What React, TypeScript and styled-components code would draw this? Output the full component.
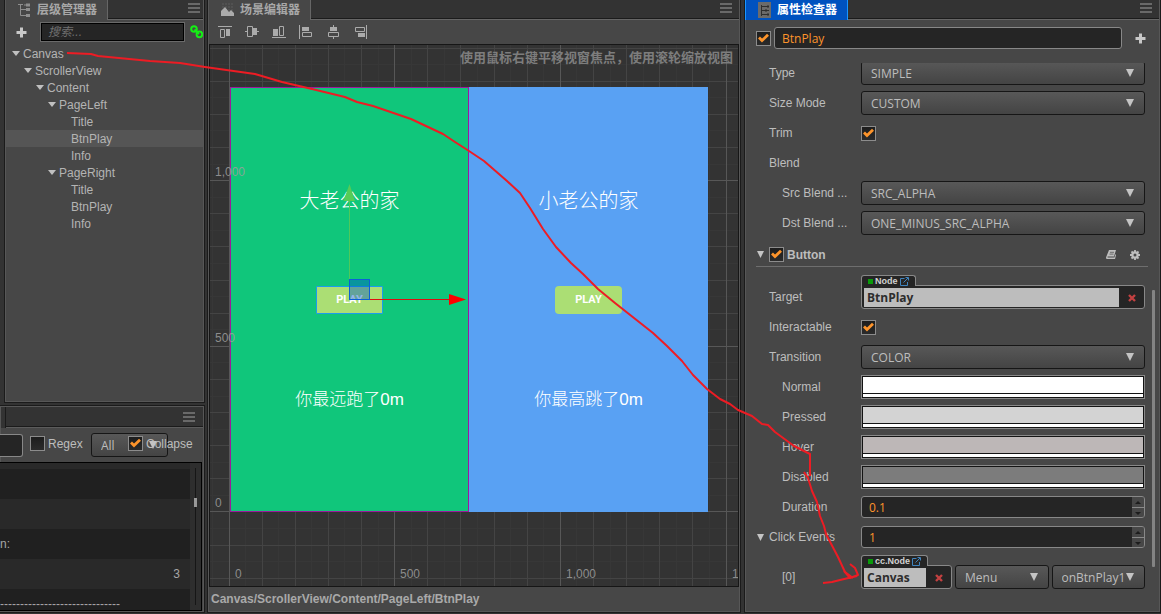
import React, { useId } from "react";
import styled, { createGlobalStyle, css } from "styled-components";

const UI = `"Liberation Sans", "Noto Sans CJK SC", sans-serif`;
const FIELD = `"Open Sans", "Noto Sans CJK SC", sans-serif`;
const C = {
  gap: "#333333",
  panel: "#474747",
  line: "#1b1b1b",
  light: "#666666",
  text: "#bdbdbd",
  orange: "#fd942b",
  field: "#252525",
  rim: "#888888",
};

const Global = createGlobalStyle`
  * { box-sizing: border-box; }
  body { margin: 0; background: ${C.gap}; color: ${C.text}; font: 12px/16px ${UI}; }
  input, select, button { font: inherit; color: inherit; margin: 0; padding: 0; }
  button { background: none; border: 0; display: grid; place-items: center; }
  svg { display: block; }
`;

const Shell = styled.div`
  position: relative;
  display: grid;
  grid-template-columns: 204px minmax(0, 1fr) 416px;
  grid-template-rows: minmax(0, 1fr);
  gap: 4px;
  height: 100vh;
  padding: 0 1px 2px 0;
  overflow: hidden;
`;

const LeftColumn = styled.div`
  display: grid;
  grid-template-rows: 402px minmax(0, 1fr);
  gap: 4px;
  min-width: 0;
`;

const Panel = styled.section<{ $inset?: number; $top?: boolean }>`
  display: flex;
  flex-direction: column;
  min-width: 0;
  min-height: 0;
  background: ${C.panel};
  border: 1px solid #575757;
  border-top-width: ${(p) => (p.$top ? 1 : 0)}px;
  box-shadow: 0 0 0 1px ${C.line};
  margin-left: ${(p) => p.$inset ?? 0}px;
`;

const TabBar = styled.header<{ $end?: number }>`
  display: flex;
  justify-content: space-between;
  align-items: flex-start;
  height: 20px;
  padding-right: ${(p) => p.$end ?? 7}px;
  background: linear-gradient(${C.gap} 18px, ${C.line} 18px, ${C.line} 19px, ${C.light} 19px);
`;

const Tab = styled.h2<{ $active?: boolean }>`
  display: flex;
  align-items: center;
  gap: 6px;
  margin: 0;
  height: 20px;
  padding: 0 10px 1px 12px;
  font: bold 12px/18px ${UI};
  color: ${(p) => (p.$active ? "#ffffff" : "#a8a8a8")};
  background: ${(p) => (p.$active ? "#0052bf" : C.panel)};
  border-right: 1px solid ${(p) => (p.$active ? "#1a96ff" : C.light)};
  margin-left: ${(p) => (p.$active ? -1 : 0)}px;
  border-left: ${(p) => (p.$active ? "1px solid #1a96ff" : "0")};
`;

const MenuButton = styled.button`
  width: 12px;
  height: 16px;
  color: #7c7c7c;
`;

/* ---------- shared controls ---------- */

const TickBox = styled.span`
  display: inline-grid;
  flex: none;
  width: 15px;
  height: 15px;
  > * { grid-area: 1 / 1; }
  input {
    appearance: none;
    width: 15px;
    height: 15px;
    border: 1px solid #8c8c8c;
    background: linear-gradient(#1d1d1d, #2b2b2b);
  }
  svg { pointer-events: none; }
`;

function Check({ id, label, checked }: { id?: string; label?: string; checked?: boolean }) {
  return (
    <TickBox>
      <input type="checkbox" id={id} aria-label={label} defaultChecked={checked} />
      {checked && (
        <svg width="15" height="15" viewBox="0 0 15 15" aria-hidden="true">
          <path d="M3 6.6 L6 9.6 L12 3.8" fill="none" stroke={C.orange} strokeWidth="2.8" />
        </svg>
      )}
    </TickBox>
  );
}

const SelectBox = styled.span<{ $pad?: number }>`
  position: relative;
  display: flex;
  flex: 1 1 0;
  min-width: 0;
  select {
    appearance: none;
    width: 100%;
    height: 24px;
    padding: 2px 16px 0 ${(p) => p.$pad ?? 9}px;
    border: 1px solid #161616;
    border-radius: 3px;
    background: linear-gradient(#585858, #444444);
    font: 12px/20px ${FIELD};
    color: ${C.text};
  }
  svg {
    position: absolute;
    right: 11px;
    top: 8px;
    pointer-events: none;
  }
`;

function Select({ id, label, value, pad }: { id?: string; label?: string; value: string; pad?: number }) {
  return (
    <SelectBox $pad={pad}>
      <select id={id} aria-label={label} defaultValue={value}>
        <option>{value}</option>
      </select>
      <svg width="8" height="8" viewBox="0 0 8 8" aria-hidden="true">
        <path d="M0 0H8L4 8Z" fill="#c4c4c4" />
      </svg>
    </SelectBox>
  );
}

const TextField = styled.input`
  flex: 1 1 0;
  min-width: 0;
  height: 22px;
  padding: 0 7px;
  border: 1px solid ${C.rim};
  border-radius: 3px;
  background: ${C.field};
  font: 12px/20px ${FIELD};
  color: ${C.orange};
`;

const ColorBox = styled.span`
  flex: 1 1 0;
  display: grid;
  grid-template-rows: 16px 3px;
  gap: 1px;
  padding: 1px;
  border: 1px solid ${C.rim};
  background: #141414;
  input {
    appearance: none;
    display: block;
    width: 100%;
    height: 100%;
    border: 0;
    background: none;
  }
  input::-webkit-color-swatch-wrapper { padding: 0; }
  input::-webkit-color-swatch { border: 0; border-radius: 0; }
`;

const AlphaBar = styled.span`
  background: #ffffff;
`;

const NumberBox = styled.span`
  flex: 1 1 0;
  display: grid;
  grid-template-columns: minmax(0, 1fr) 12px;
  height: 22px;
  border: 1px solid ${C.rim};
  border-radius: 3px;
  background: ${C.field};
  overflow: hidden;
  input {
    min-width: 0;
    border: 0;
    padding: 1px 7px 0;
    background: none;
    font: 12px/20px ${FIELD};
    color: ${C.orange};
  }
`;

const Stepper = styled.span`
  display: grid;
  grid-template-rows: 1fr 1fr;
  gap: 1px;
  background: ${C.rim};
  button { background: #474747; color: #1c1c1c; }
`;

function NumberField({ id, value }: { id: string; value: string }) {
  return (
    <NumberBox>
      <input id={id} defaultValue={value} inputMode="decimal" />
      <Stepper>
        <button aria-label="Increase"><svg width="6" height="3" viewBox="0 0 6 3"><path d="M0 3H6L3 0Z" fill="currentColor" /></svg></button>
        <button aria-label="Decrease"><svg width="6" height="3" viewBox="0 0 6 3"><path d="M0 0H6L3 3Z" fill="currentColor" /></svg></button>
      </Stepper>
    </NumberBox>
  );
}

const NodeBox = styled.span`
  position: relative;
  flex: 1 1 0;
  min-width: 0;
  display: grid;
  grid-template-columns: minmax(0, 1fr) 25px;
  height: 24px;
  padding: 2px 0 2px 2px;
  border: 1px solid ${C.rim};
  border-radius: 0 3px 3px 3px;
  background: ${C.field};
  input {
    min-width: 0;
    border: 0;
    padding: 1px 3px 0;
    background: #bdbdbd;
    font: bold 12px/18px ${FIELD};
    color: #2d2d2d;
  }
`;

const NodeTag = styled.span`
  position: absolute;
  left: -1px;
  top: -11px;
  display: flex;
  align-items: center;
  gap: 2px;
  height: 11px;
  padding: 0 6px;
  border: 1px solid ${C.rim};
  border-bottom: 0;
  border-radius: 3px 3px 0 0;
  background: ${C.field};
  font: bold 9px/10px ${UI};
  color: #d2d2d2;
`;

const TypeDot = styled.i`
  width: 5px;
  height: 5px;
  background: #0a9b0a;
`;

function NodeField({ id, label, type, value }: { id?: string; label?: string; type: string; value: string }) {
  return (
    <NodeBox>
      <NodeTag>
        <TypeDot />
        {type}
        <svg width="9" height="9" viewBox="0 0 9 9" fill="none" stroke="#3f83bd" aria-hidden="true">
          <path d="M4.5 1.5H.5V8.5H7.5V5M3.5 5.5L8 1M5.5 .5H8.5V3.5" />
        </svg>
      </NodeTag>
      <input id={id} aria-label={label} defaultValue={value} readOnly />
      <button aria-label="Clear">
        <svg width="8" height="8" viewBox="0 0 8 8"><path d="M1 1L7 7M7 1L1 7" stroke="#c24141" strokeWidth="2.4" /></svg>
      </button>
    </NodeBox>
  );
}

const Plus = () => (
  <svg width="11" height="11" viewBox="0 0 11 11" aria-hidden="true">
    <path d="M4 0.5H7V4H10.5V7H7V10.5H4V7H0.5V4H4Z" fill="#c8c8c8" />
  </svg>
);

const Menu = ({ label }: { label: string }) => (
  <MenuButton aria-label={label}>
    <svg width="12" height="10" viewBox="0 0 12 10"><path d="M0 1H12M0 5H12M0 9H12" stroke="currentColor" strokeWidth="1.6" /></svg>
  </MenuButton>
);

/* ---------- hierarchy ---------- */

const SearchRow = styled.div`
  display: flex;
  align-items: center;
  height: 23px;
  padding: 1px 0 0 10px;
  margin-bottom: 2px;
  overflow: hidden;
  button { flex: none; }
  input {
    flex: 1 1 0;
    min-width: 0;
    height: 20px;
    margin: 0 5px 0 13px;
    padding: 0 7px;
    border: 1px solid #6a6a6a;
    outline: 1px solid #000;
    outline-offset: -2px;
    background: ${C.field};
    font-style: italic;
  }
  input::placeholder { color: #6f6f6f; }
`;

const Tree = styled.ul`
  margin: 0;
  padding: 0;
  list-style: none;
`;

const TreeRow = styled.li<{ $depth: number; $selected?: boolean }>`
  display: flex;
  align-items: center;
  gap: 3px;
  height: 17px;
  padding-left: ${(p) => 6 + p.$depth * 12}px;
  color: #b4b4b4;
  background: ${(p) => (p.$selected ? "#555555" : "transparent")};
`;

const Twisty = styled.span`
  width: 8px;
  color: #c0c0c0;
`;

const nodes = [
  { name: "Canvas", depth: 0, open: true },
  { name: "ScrollerView", depth: 1, open: true },
  { name: "Content", depth: 2, open: true },
  { name: "PageLeft", depth: 3, open: true },
  { name: "Title", depth: 4 },
  { name: "BtnPlay", depth: 4, selected: true },
  { name: "Info", depth: 4 },
  { name: "PageRight", depth: 3, open: true },
  { name: "Title", depth: 4 },
  { name: "BtnPlay", depth: 4 },
  { name: "Info", depth: 4 },
];

function Hierarchy() {
  return (
    <Panel $inset={5}>
      <TabBar $end={3}>
        <Tab>
          <svg width="13" height="14" viewBox="0 0 13 14" fill="none" stroke="#8e8e8e" aria-hidden="true">
            <path d="M0 1.5H5M2.5 2V12.5H8M2.5 6.5H8" />
            <path d="M8 2H12M8 6.5H12M8 12.5H12" strokeWidth="3" />
            <path d="M6 2H8" />
          </svg>
          层级管理器
        </Tab>
        <Menu label="层级管理器" />
      </TabBar>
      <SearchRow>
        <button aria-label="Add node"><Plus /></button>
        <input type="search" placeholder="搜索..." aria-label="搜索" />
        <button aria-label="Link">
          <svg width="13" height="14" viewBox="0 0 13 14" fill="none" stroke="#15ee15" strokeWidth="2" aria-hidden="true">
            <circle cx="4" cy="4" r="2.8" />
            <circle cx="9.4" cy="9.4" r="2.8" />
            <path d="M4.5 4.5L9 9" />
          </svg>
        </button>
      </SearchRow>
      <Tree>
        {nodes.map((n, i) => (
          <TreeRow key={i} $depth={n.depth} $selected={n.selected}>
            <Twisty>
              {n.open && <svg width="8" height="5" viewBox="0 0 8 5"><path d="M0 0H8L4 5Z" fill="currentColor" /></svg>}
            </Twisty>
            {n.name}
          </TreeRow>
        ))}
      </Tree>
    </Panel>
  );
}

/* ---------- console ---------- */

const ConsoleTabs = styled(TabBar)`
  height: 21px;
  padding-top: 2px;
  background: linear-gradient(${C.gap} 19px, ${C.line} 19px, ${C.line} 20px, #5c5c5c 20px);
  border-left: 4px solid ${C.gap};
  box-shadow: inset 1px 0 ${C.line};
`;

const ConsoleTools = styled.div`
  display: grid;
  grid-template-columns: 23px 68px 77px 1fr;
  align-items: center;
  height: 34px;
  margin-left: -1px;
  input[type="text"] {
    width: 23px;
    height: 23px;
    border: 1px solid ${C.rim};
    border-left: 0;
    border-radius: 0 3px 3px 0;
    background: ${C.field};
  }
`;

const TickLabel = styled.label<{ $over?: boolean }>`
  position: relative;
  display: flex;
  align-items: center;
  gap: 3px;
  padding-left: 7px;
  padding-bottom: 3px;
  margin-left: ${(p) => (p.$over ? -47 : 0)}px;
  pointer-events: ${(p) => (p.$over ? "none" : "auto")};
`;

const Log = styled.div`
  flex: 1 1 0;
  display: grid;
  grid-template-columns: minmax(0, 1fr) 11px;
  grid-template-rows: minmax(0, 1fr);
  min-height: 0;
  margin-right: 1px;
  margin-left: -1px;
  border: 1px solid #000;
  border-left: 0;
  background: #2e2e2e;
`;

const LogList = styled.ol`
  margin: 0;
  padding: 0;
  list-style: none;
  overflow: hidden;
`;

const LogLine = styled.li<{ $dark?: boolean; $short?: boolean; $right?: boolean }>`
  height: ${(p) => (p.$short ? 6 : 30)}px;
  line-height: 31px;
  padding-right: 10px;
  overflow: hidden;
  white-space: nowrap;
  text-align: ${(p) => (p.$right ? "right" : "left")};
  color: #a6a6a6;
  background: ${(p) => (p.$dark ? "#202020" : "#292929")};
`;

const LogTrack = styled.div`
  display: grid;
  justify-items: center;
  align-items: start;
  padding: 5px 0;
  background: linear-gradient(90deg, transparent 5px, #161616 5px, #161616 6px, transparent 6px) 0 5px / 100% calc(100% - 10px) no-repeat;
`;

const LogThumb = styled.i`
  width: 3px;
  height: 9px;
  margin-top: 30px;
  background: #9a9a9a;
`;

function Console() {
  const regex = useId();
  const collapse = useId();
  return (
    <Panel $top>
      <ConsoleTabs as="div" $end={8}><span /><Menu label="Console menu" /></ConsoleTabs>
      <ConsoleTools>
        <input type="text" aria-label="Filter" />
        <TickLabel htmlFor={regex}><Check id={regex} />Regex</TickLabel>
        <Select label="Level" value="All" />
        <TickLabel htmlFor={collapse} $over><Check id={collapse} checked />Collapse</TickLabel>
      </ConsoleTools>
      <Log>
        <LogList>
          <LogLine $short />
          <LogLine $dark />
          <LogLine />
          <LogLine $dark>n:</LogLine>
          <LogLine $right>3</LogLine>
          <LogLine $dark>------------------------------</LogLine>
        </LogList>
        <LogTrack><LogThumb /></LogTrack>
      </Log>
    </Panel>
  );
}

/* ---------- scene ---------- */

const AlignBar = styled.div`
  display: flex;
  align-items: center;
  gap: 13px;
  height: 24px;
  padding-left: 9px;
  button { width: 14px; height: 14px; color: #ababab; }
`;

const alignIcons = [
  { name: "Align top", d: "M0 1.5H14M2.5 4.5H6.5V12.5H2.5Z", r: [8, 4, 4, 7] },
  { name: "Align vertical centre", d: "M0 6.5H3M12 6.5H14M2.5 1.5H7.5V11.5H2.5Z", r: [8, 3, 4, 7] },
  { name: "Align bottom", d: "M0 12.5H14M7.5 1.5H11.5V10.5H7.5Z", r: [1, 4, 5, 7] },
  { name: "Align left", d: "M.5 0V14M3.5 7.5H12.5V11.5H3.5Z", r: [3, 2, 7, 4] },
  { name: "Align horizontal centre", d: "M7.5 0V2M7.5 12V14M2.5 7.5H12.5V11.5H2.5Z", r: [4, 2, 7, 4] },
  { name: "Align right", d: "M13.5 0V14M2.5 2.5H11.5V6.5H2.5Z", r: [5, 8, 7, 4] },
];

const Stage = styled.div`
  position: relative;
  flex: 1;
  min-height: 0;
  overflow: hidden;
  border: 1px solid #161616;
  background: #333333;
`;

const GridLayer = styled.svg`
  position: absolute;
  inset: 0;
  width: 100%;
  height: 100%;
`;

const Page = styled.div<{ $x: number; $color: string; $framed?: boolean }>`
  position: absolute;
  left: ${(p) => p.$x}px;
  top: 42px;
  width: 239px;
  height: 425px;
  background: ${(p) => p.$color};
  border: 1px solid ${(p) => (p.$framed ? "#9c1a9c" : p.$color)};
  color: #ffffff;
  text-align: center;
  font-family: ${UI};
`;

const PageTitle = styled.div`
  position: absolute;
  inset: 97px 0 auto;
  font: 300 20px/30px "Noto Sans CJK SC", sans-serif;
`;

const PageInfo = styled.div`
  position: absolute;
  inset: 298px 0 auto;
  font: 300 17px/28px ${UI};
`;

const PlayButton = styled.button<{ $selected?: boolean }>`
  position: absolute;
  left: 85px;
  top: 198px;
  width: 67px;
  height: 28px;
  border-radius: ${(p) => (p.$selected ? 1 : 4)}px;
  border: ${(p) => (p.$selected ? "1px solid #1b9cf0" : "0")};
  background: #abde74;
  font: bold 11px/16px Roboto, sans-serif;
  color: #ffffff;
`;

const AxisLabel = styled.span<{ $x?: number; $y?: number }>`
  position: absolute;
  left: ${(p) => p.$x ?? 5}px;
  top: ${(p) => p.$y ?? 521}px;
  color: rgba(158, 158, 158, 0.85);
`;

const Hint = styled.p`
  position: absolute;
  top: 4px;
  right: 5px;
  margin: 0;
  font: bold 13px/18px ${UI};
  color: #7d7d7d;
  white-space: nowrap;
`;

const StatusBar = styled.footer`
  height: 24px;
  padding-left: 2px;
  font: bold 12px/24px ${UI};
  color: #a9a9a9;
`;

const STEP = 16.57;
const shade = (i: number) => (i % 10 === 0 ? "#575757" : i % 2 === 0 ? "#444444" : "#373737");

function Grid() {
  const xs = Array.from({ length: 140 }, (_, k) => k - 1);
  const ys = Array.from({ length: 100 }, (_, k) => k - 60);
  const order = (a: number) => (a % 10 === 0 ? 2 : a % 2 === 0 ? 1 : 0);
  const lines = [
    ...xs.map((i) => ({ i, d: `M${Math.floor(19 + i * STEP) + 0.5} 0V2000` })),
    ...ys.map((i) => ({ i, d: `M0 ${Math.ceil(466 + i * STEP) + 0.5}H3000` })),
  ].sort((a, b) => order(a.i) - order(b.i));
  return (
    <GridLayer aria-hidden="true">
      {lines.map((l) => <path key={l.d} d={l.d} stroke={shade(l.i)} />)}
    </GridLayer>
  );
}

function Scene() {
  return (
    <Panel>
      <TabBar>
        <Tab>
          <svg width="13" height="14" viewBox="0 0 13 14" aria-hidden="true">
            <path d="M1 1H13M1 4H13M1 7H13" stroke="#5c5c5c" strokeDasharray="2 1" />
            <path d="M0 13V8L4 4L8 9L10 7L13 10V13Z" fill="#ababab" />
          </svg>
          场景编辑器
        </Tab>
        <Menu label="场景编辑器" />
      </TabBar>
      <AlignBar>
        {alignIcons.map((a) => (
          <button key={a.name} aria-label={a.name}>
            <svg width="14" height="14" viewBox="0 0 14 14">
              <path d={a.d} fill="none" stroke="currentColor" />
              <rect x={a.r[0]} y={a.r[1]} width={a.r[2]} height={a.r[3]} fill="currentColor" />
            </svg>
          </button>
        ))}
      </AlignBar>
      <Stage>
        <Grid />
        <Page $x={20} $color="#10c67b" $framed>
          <PageTitle>大老公的家</PageTitle>
          <PlayButton $selected>PLAY</PlayButton>
          <PageInfo>你最远跑了0m</PageInfo>
        </Page>
        <Page $x={259} $color="#59a1f3">
          <PageTitle>小老公的家</PageTitle>
          <PlayButton>PLAY</PlayButton>
          <PageInfo>你最高跳了0m</PageInfo>
        </Page>
        <GridLayer aria-hidden="true">
          <path d="M139.5 156V234" stroke="#4fc95a" />
          <path d="M139.5 139L145 156H133.5Z" fill="#56cc56" />
          <rect x="139.5" y="234.5" width="20" height="20" fill="#0050d0" fillOpacity=".42" stroke="#0b5fd8" />
          <path d="M160 254.5H240" stroke="#e00f0f" />
          <path d="M239 249L256 254.5L239 260Z" fill="#ff0000" />
        </GridLayer>
        <AxisLabel $y={119}>1,000</AxisLabel>
        <AxisLabel $y={285}>500</AxisLabel>
        <AxisLabel $y={450}>0</AxisLabel>
        <AxisLabel $x={25}>0</AxisLabel>
        <AxisLabel $x={190}>500</AxisLabel>
        <AxisLabel $x={356}>1,000</AxisLabel>
        <AxisLabel $x={522}>1,500</AxisLabel>
        <Hint>使用鼠标右键平移视窗焦点，使用滚轮缩放视图</Hint>
      </Stage>
      <StatusBar>Canvas/ScrollerView/Content/PageLeft/BtnPlay</StatusBar>
    </Panel>
  );
}

/* ---------- inspector ---------- */

const NameRow = styled.div`
  display: flex;
  align-items: center;
  gap: 3px;
  height: 43px;
  padding: 0 13px 7px 10px;
  > button { width: 11px; margin-left: 10px; }
`;

const Scroller = styled.div`
  position: relative;
  flex: 1;
  min-height: 0;
  overflow: hidden;
`;

const Rows = styled.div`
  margin-top: -5px;
  padding-bottom: 4px;
`;

const ScrollThumb = styled.i`
  position: absolute;
  right: 4px;
  top: 227px;
  width: 3px;
  height: 277px;
  border-radius: 1px;
  background: #838383;
`;

const RowBox = styled.div<{ $gap?: number }>`
  display: grid;
  grid-template-columns: 13px 92px minmax(0, 1fr);
  align-items: center;
  height: 30px;
  margin-top: ${(p) => p.$gap ?? 0}px;
  padding: 0 14px 0 10px;
`;

const RowLabel = styled.label<{ $indent?: boolean }>`
  padding-left: ${(p) => (p.$indent ? 13 : 0)}px;
  white-space: nowrap;
`;

const RowControls = styled.div`
  display: flex;
  align-items: center;
`;

const EventFields = styled.div`
  flex: 1;
  display: grid;
  grid-template-columns: 91px minmax(0, 1fr) minmax(0, 1fr);
  gap: 3px;
`;

const Caret = () => (
  <svg width="7" height="7" viewBox="0 0 7 7" aria-hidden="true">
    <path d="M0 0H7L3.5 7Z" fill="#c4c4c4" />
  </svg>
);

const CaretSlot = styled.span`
  padding-left: 1px;
`;

function Row({ label, indent, caret, gap, children }: {
  label: string; indent?: boolean; caret?: boolean; gap?: number; children?: (id: string) => React.ReactNode;
}) {
  const id = useId();
  return (
    <RowBox $gap={gap}>
      <CaretSlot>{caret && <Caret />}</CaretSlot>
      <RowLabel htmlFor={id} $indent={indent}>{label}</RowLabel>
      <RowControls>{children?.(id)}</RowControls>
    </RowBox>
  );
}

const SectionHead = styled.div`
  display: flex;
  align-items: center;
  height: 29px;
  margin: 0 11px 0 10px;
  padding: 5px 8px 0 1px;
  border-bottom: 1px solid #6e6e6e;
  label { flex: 1; padding-left: 3px; font-weight: bold; }
  > svg { margin-right: 5px; }
  button { margin-left: 14px; color: #bdbdbd; }
`;

const swatches = [
  { label: "Normal", color: "#ffffff" },
  { label: "Pressed", color: "#d3d3d3" },
  { label: "Hover", color: "#bdb7b7" },
  { label: "Disabled", color: "#7c7c7c" },
];

function Inspector() {
  const button = useId();
  return (
    <Panel $inset={1}>
      <TabBar>
        <Tab $active>
          <svg width="13" height="16" viewBox="0 0 13 16" aria-hidden="true">
            <rect width="13" height="16" fill="#6b6b6b" />
            <path d="M3 4.5H11M3 8.5H11M3 12.5H11M3.5 3V14M10 3V6M8 7V10M10 11V14" stroke="#2f2f2f" />
          </svg>
          属性检查器
        </Tab>
        <Menu label="属性检查器" />
      </TabBar>
      <NameRow>
        <Check label="Active" checked />
        <TextField aria-label="Name" defaultValue="BtnPlay" />
        <button aria-label="Add component"><Plus /></button>
      </NameRow>
      <Scroller>
        <Rows>
          <Row label="Type">{(id) => <Select id={id} value="SIMPLE" />}</Row>
          <Row label="Size Mode">{(id) => <Select id={id} value="CUSTOM" />}</Row>
          <Row label="Trim">{(id) => <Check id={id} checked />}</Row>
          <Row label="Blend" />
          <Row label="Src Blend ..." indent>{(id) => <Select id={id} value="SRC_ALPHA" />}</Row>
          <Row label="Dst Blend ..." indent>{(id) => <Select id={id} value="ONE_MINUS_SRC_ALPHA" />}</Row>
          <SectionHead>
            <Caret />
            <Check id={button} checked />
            <label htmlFor={button}>Button</label>
            <button aria-label="Documentation">
              <svg width="10" height="9" viewBox="0 0 10 9">
                <path d="M3 0H10L8 6.4H1.6V7.4H8.4L9.4 4L10 5L9 9H1Q0 9 0 7.5Z" fill="currentColor" />
                <path d="M4 2.3H8M3.5 4.1H7.5" stroke={C.panel} strokeWidth=".7" />
              </svg>
            </button>
            <button aria-label="Component settings">
              <svg width="10" height="10" viewBox="0 0 10 10">
                <circle cx="5" cy="5" r="2.6" fill="none" stroke="currentColor" strokeWidth="2.2" />
                <path d="M5 0V2M5 8V10M0 5H2M8 5H10M1.5 1.5L3 3M7 7L8.5 8.5M8.5 1.5L7 3M3 7L1.5 8.5" stroke="currentColor" strokeWidth="1.8" />
              </svg>
            </button>
          </SectionHead>
          <Row label="Target" gap={15}>{(id) => <NodeField id={id} type="Node" value="BtnPlay" />}</Row>
          <Row label="Interactable">{(id) => <Check id={id} checked />}</Row>
          <Row label="Transition">{(id) => <Select id={id} value="COLOR" />}</Row>
          {swatches.map((s) => (
            <Row key={s.label} label={s.label} indent>
              {(id) => <ColorBox><input type="color" id={id} defaultValue={s.color} /><AlphaBar /></ColorBox>}
            </Row>
          ))}
          <Row label="Duration" indent>{(id) => <NumberField id={id} value="0.1" />}</Row>
          <Row label="Click Events" caret>{(id) => <NumberField id={id} value="1" />}</Row>
          <Row label="[0]" indent gap={10}>
            {(id) => (
              <EventFields>
                <NodeField id={id} type="cc.Node" value="Canvas" />
                <Select label="Component" value="Menu" />
                <Select label="Handler" value="onBtnPlay1" />
              </EventFields>
            )}
          </Row>
        </Rows>
        <ScrollThumb />
      </Scroller>
    </Panel>
  );
}

/* ---------- hand-drawn arrow from Canvas to the event target ---------- */

const Ink = styled.svg`
  position: absolute;
  left: 0;
  top: 0;
  pointer-events: none;
`;

export default function App() {
  return (
    <>
      <Global />
      <Shell>
        <LeftColumn>
          <Hierarchy />
          <Console />
        </LeftColumn>
        <Scene />
        <Inspector />
        <Ink width="870" height="600" viewBox="0 0 870 600" fill="none" stroke="#ed1c24" strokeWidth="2" strokeLinejoin="round" aria-hidden="true">
          <path d="M67 53L91 54L98 56L150 61L180 63L205 67L255 74L282 82L312 89L345 97L357 102L373 106L411 119L443 134L455 142L469 151L484 161L507 181L520 193L530 208L543 229L556 247L571 263L583 274L598 289L615 303L634 318L653 333L667 346L682 361L693 375L707 389L720 399L730 404L738 410L752 416L762 424L768 425L775 432L794 446L810 454L810 476" />
          <path d="M804 472L808 478L812 491L817 502L820 516L824 526L826 534L838 557L845 572L853 578" />
          <path d="M823 583L832 582L840 580L857 576M850 564L855 568L858 575L850 578L844 571" />
        </Ink>
      </Shell>
    </>
  );
}
